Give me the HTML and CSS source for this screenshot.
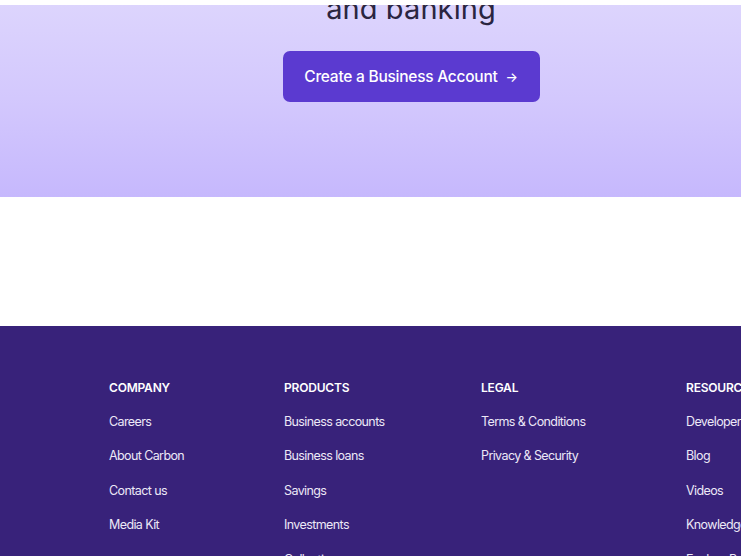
FILE: index.html
```html
<!DOCTYPE html>
<html lang="en">
<head>
<meta charset="utf-8">
<title>Carbon Business</title>
<link rel="stylesheet" href="styles.css">
</head>
<body>
<div class="topbar"></div>
<section class="hero">
  <h2 class="hero-title">and banking</h2>
  <a class="cta" href="#">Create a Business Account <span class="arrow">&rarr;</span></a>
</section>
<div class="spacer"></div>
<footer class="footer">
  <div class="cols">
    <div class="col">
      <h4>COMPANY</h4>
      <ul>
        <li>Careers</li>
        <li>About Carbon</li>
        <li>Contact us</li>
        <li>Media Kit</li>
      </ul>
    </div>
    <div class="col">
      <h4>PRODUCTS</h4>
      <ul>
        <li>Business accounts</li>
        <li>Business loans</li>
        <li>Savings</li>
        <li>Investments</li>
        <li>Collections</li>
      </ul>
    </div>
    <div class="col">
      <h4>LEGAL</h4>
      <ul>
        <li>Terms &amp; Conditions</li>
        <li>Privacy &amp; Security</li>
      </ul>
    </div>
    <div class="col">
      <h4>RESOURCES</h4>
      <ul>
        <li>Developers</li>
        <li>Blog</li>
        <li>Videos</li>
        <li>Knowledge base</li>
        <li>Explore Business</li>
      </ul>
    </div>
  </div>
</footer>
</body>
</html>
```
FILE: styles.css
```css
html, body {
  margin: 0;
  padding: 0;
  overflow: hidden;
}
body {
  font-family: Inter, "Liberation Sans", sans-serif;
  background: #ffffff;
  width: 741px;
}
.topbar {
  position: fixed;
  top: 0;
  left: 0;
  right: 0;
  height: 5px;
  background: #ffffff;
  z-index: 5;
}
.hero {
  height: 197px;
  background: linear-gradient(180deg, #ddd5fd 0%, #d3c8fd 50%, #c6b8fd 100%);
  display: flex;
  flex-direction: column;
  align-items: center;
  padding-left: 81px;
  box-sizing: border-box;
  overflow: hidden;
}
.hero-title {
  margin: -9px 0 0 0;
  font-size: 29px;
  line-height: 36px;
  font-weight: 400;
  color: #2a2540;
  letter-spacing: 0.1px;
}
.cta {
  margin-top: 24px;
  width: 257px;
  height: 51px;
  box-sizing: border-box;
  background: #5b3ad0;
  border-radius: 7px;
  color: #ffffff;
  text-decoration: none;
  font-size: 15.5px;
  font-weight: 500;
  letter-spacing: -0.25px;
  display: flex;
  align-items: center;
  justify-content: center;
  gap: 8px;
}
.arrow {
  font-size: 13px;
}
.spacer {
  height: 129px;
}
.footer {
  background: #38227a;
  height: 230px;
  padding: 55px 0 0 109px;
  box-sizing: border-box;
  overflow: hidden;
}
.cols {
  display: grid;
  grid-template-columns: 175px 197px 205px 200px;
  width: 777px;
}
.col h4 {
  margin: 0 0 19px 0;
  font-size: 12px;
  line-height: 14px;
  font-weight: 600;
  color: #ffffff;
  letter-spacing: -0.2px;
  white-space: nowrap;
}
.col ul {
  list-style: none;
  margin: 0;
  padding: 0;
  display: flex;
  flex-direction: column;
  gap: 18.4px;
}
.col li {
  font-size: 12.5px;
  line-height: 16px;
  color: #ece8f7;
  letter-spacing: -0.6px;
  white-space: nowrap;
}
```
